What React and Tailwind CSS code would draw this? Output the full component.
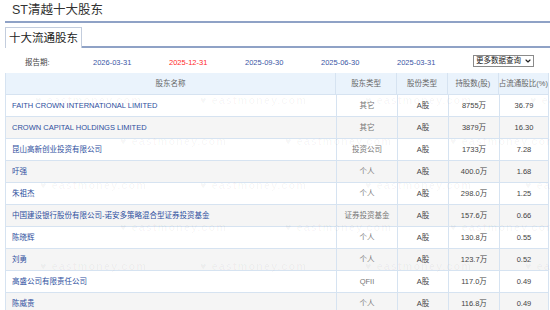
import { ChevronDown } from 'lucide-react';

const font = { fontFamily: '"Liberation Sans", "Noto Sans CJK SC", sans-serif' };

const dates = [
  { label: '2026-03-31', active: false },
  { label: '2025-12-31', active: true },
  { label: '2025-09-30', active: false },
  { label: '2025-06-30', active: false },
  { label: '2025-03-31', active: false },
];

const rows = [
  ['FAITH CROWN INTERNATIONAL LIMITED', '其它', 'A股', '8755万', '36.79'],
  ['CROWN CAPITAL HOLDINGS LIMITED', '其它', 'A股', '3879万', '16.30'],
  ['昆山高新创业投资有限公司', '投资公司', 'A股', '1733万', '7.28'],
  ['吁强', '个人', 'A股', '400.0万', '1.68'],
  ['朱祖杰', '个人', 'A股', '298.0万', '1.25'],
  ['中国建设银行股份有限公司-诺安多策略混合型证券投资基金', '证券投资基金', 'A股', '157.6万', '0.66'],
  ['陈晓辉', '个人', 'A股', '130.8万', '0.55'],
  ['刘勇', '个人', 'A股', '123.7万', '0.52'],
  ['高盛公司有限责任公司', 'QFII', 'A股', '117.0万', '0.49'],
  ['陈威贵', '个人', 'A股', '116.8万', '0.49'],
];

// faint watermark positions
const marks = [
  [35, 92], [200, 92], [365, 92], [530, 92],
  [120, 133], [285, 133], [450, 133],
  [40, 177], [200, 177], [365, 177], [525, 177],
  [120, 219], [285, 219], [450, 219],
  [40, 258], [200, 258], [365, 258], [525, 258],
];

const cell = 'flex h-full items-center justify-center whitespace-nowrap border-l border-[#d6e3f1]';

const App = () => {
  return (
    <div className="relative w-[550px] h-[310px] overflow-hidden bg-white text-[#333]" style={font}>
      <div className="pl-[12px] pt-[3px] h-[21px] text-[12.5px] leading-[15px] text-[#333]">ST清越十大股东</div>
      <div className="ml-[5px] h-[2px] bg-[#8fa2c6]" />

      <div className="ml-[5px] mt-[4px] flex border-b-2 border-[#8fa2c6]">
        <div className="-mb-[2px] h-[21px] border border-b-0 border-[#c3cddd] bg-white px-[3px] text-[11.5px] leading-[20px] text-[#222]">
          十大流通股东
        </div>
      </div>

      <div className="mt-[7px] flex h-[16px] items-center whitespace-nowrap text-[7.5px]">
        <div className="w-[93px] pl-[25px] text-[#444]">报告期:</div>
        {dates.map((d) => (
          <div key={d.label} className={`w-[76px] ${d.active ? 'text-[#ff2a2a]' : 'text-[#3a56a5]'}`}>
            {d.label}
          </div>
        ))}
        <div className="-mt-[5px] flex h-[12px] items-center border border-[#8a8a8a] bg-white pl-[2px] pr-[1px] text-[7.5px] leading-[10px] text-[#222]">
          更多数据查询
          <ChevronDown size={8} strokeWidth={3.5} className="ml-[3px]" />
        </div>
      </div>

      <div className="ml-[5px] mt-[2px] w-[544px] border-l border-r border-[#d6e3f1] text-[7.5px]">
        <div className="flex h-[21px] items-center bg-[#eaf3fc] text-[#666]">
          <div className="w-[330px] text-center">股东名称</div>
          <div className={`${cell} w-[61px]`}>股东类型</div>
          <div className={`${cell} w-[51px]`}>股份类型</div>
          <div className={`${cell} w-[51px]`}>持股数(股)</div>
          <div className={`${cell} flex-1`}>占流通股比(%)</div>
        </div>
        {rows.map((r, i) => (
          <div
            key={r[0]}
            className={`flex h-[22px] items-center border-t border-[#d6e3f1] ${i % 2 ? 'bg-[#f5f5f5]' : 'bg-white'}`}
          >
            <div className="w-[330px] truncate pl-[6px] text-[#2e4f9e]">{r[0]}</div>
            <div className={`${cell} w-[61px] text-[#777]`}>{r[1]}</div>
            <div className={`${cell} w-[51px] text-[#444]`}>{r[2]}</div>
            <div className={`${cell} w-[51px] text-[#444]`}>{r[3]}</div>
            <div className={`${cell} flex-1 text-[#444]`}>{r[4]}</div>
          </div>
        ))}
      </div>

      {marks.map(([x, y]) => (
        <div
          key={`${x}-${y}`}
          className="pointer-events-none absolute whitespace-nowrap text-[11px] font-bold tracking-[1px] text-black/[0.035]"
          style={{ left: x, top: y }}
        >
          ♥ eastmoney.com
        </div>
      ))}
    </div>
  );
};

export default App;
